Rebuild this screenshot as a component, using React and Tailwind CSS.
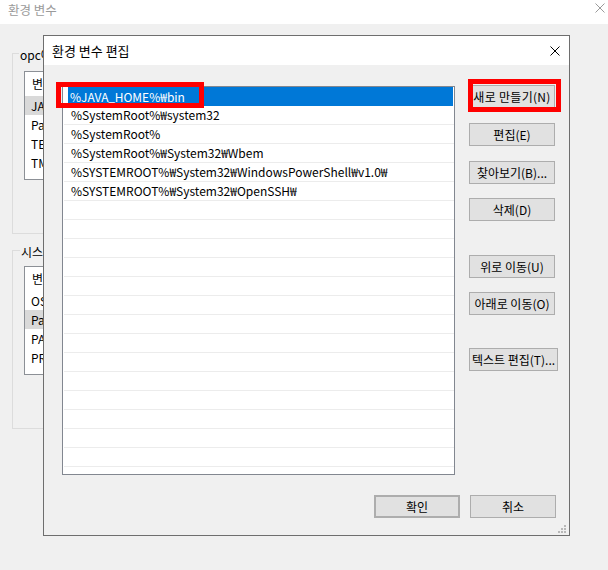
import React from "react";

const FONT = "font-['Noto_Sans_CJK_KR','Noto_Sans',sans-serif]";

function XIcon({ color, className }) {
  return (
    <svg width="10" height="10" viewBox="0 0 10 10" className={className}>
      <path d="M0.5 0.5 L9.5 9.5 M9.5 0.5 L0.5 9.5" stroke={color} strokeWidth="1" fill="none" />
    </svg>
  );
}

function Btn({ children, className = "" }) {
  return (
    <div
      className={`h-[23px] flex items-center justify-center bg-[#e1e1e1] border border-[#adadad] text-[12px] leading-[16px] text-black whitespace-nowrap ${className}`}
    >
      {children}
    </div>
  );
}

function BgList({ rows, highlight }) {
  return (
    <div className="w-[520px] h-[109px] bg-white border border-[#8c9096] overflow-hidden">
      <div className="h-[24px] flex items-center pl-[7px] text-[12px] leading-[16px]">
        <span className="w-[150px]">변수</span>
        <span>값</span>
      </div>
      {rows.map((r, i) => (
        <div
          key={i}
          className={`h-[19px] flex items-center pl-[6px] text-[12px] leading-[16px] ${
            i === highlight ? "bg-[#d9d9d9]" : ""
          }`}
        >
          {r}
        </div>
      ))}
    </div>
  );
}

const items = [
  "%SystemRoot%₩system32",
  "%SystemRoot%",
  "%SystemRoot%₩System32₩Wbem",
  "%SYSTEMROOT%₩System32₩WindowsPowerShell₩v1.0₩",
  "%SYSTEMROOT%₩System32₩OpenSSH₩",
];

export default function App() {
  const allRows = [...items, ...Array(15).fill("")];
  return (
    <div className={`relative w-[608px] h-[570px] overflow-hidden bg-[#f0f0f0] ${FONT} text-[12px] text-black`}>
      {/* background window title bar */}
      <div className="h-[24px] bg-white flex items-start justify-between">
        <span className="ml-[8px] mt-[2px] text-[12.5px] leading-[15px] text-[#9a9a9a]">환경 변수</span>
        <XIcon color="#9a9a9a" className="mr-[3px] mt-[3px]" />
      </div>

      {/* background window body */}
      <div className="pl-[12px]">
        <div className="mt-[29px] w-[545px] h-[181px] border border-[#dcdcdc]">
          <div className="-mt-[7px] ml-[6px] w-fit h-[16px] px-[1px] bg-[#f0f0f0] leading-[16px]">
            opc에 대한 사용자 변수(U)
          </div>
          <div className="mt-[8px] ml-[11px]">
            <BgList rows={["JAVA_HOME", "Path", "TEMP", "TMP"]} highlight={0} />
          </div>
        </div>
        <div className="mt-[16px] w-[545px] h-[179px] border border-[#dcdcdc]">
          <div className="-mt-[7px] ml-[7px] w-fit h-[16px] px-[1px] bg-[#f0f0f0] leading-[16px]">
            시스템 변수(S)
          </div>
          <div className="mt-[6px] ml-[11px]">
            <BgList rows={["OS", "Path", "PATHEXT", "PROCESSOR_ARCHITECTURE"]} highlight={1} />
          </div>
        </div>
      </div>

      {/* dialog window */}
      <div className="absolute left-[43px] top-[35px] w-[527px] h-[501px] border border-[#6e6e6e] bg-[#f0f0f0] flex flex-col">
        <div className="h-[29px] shrink-0 bg-white flex items-center justify-between">
          <span className="ml-[8px] text-[13px] leading-[16px] text-black">환경 변수 편집</span>
          <XIcon color="#000000" className="mr-[9px]" />
        </div>

        <div className="flex pt-[21px] pl-[18px]">
          {/* list */}
          <div className="w-[393px] h-[389px] bg-white border border-[#828790] overflow-hidden">
            <div className="h-[19px] flex">
              <div className="ml-[5px] mr-[1px] flex-1 bg-[#0078d7] text-white pl-[2px] flex items-center leading-[18px] whitespace-pre">
                <span>%JAVA</span>
                <span className="font-['Liberation_Sans',sans-serif] text-[11px]">_</span>
                <span>HOME%₩bin</span>
              </div>
            </div>
            {allRows.map((r, i) => (
              <div
                key={i}
                className="h-[19px] border-b border-[#ececec] flex items-center pl-[7px] leading-[18px] ml-[1px]"
              >
                {r}
              </div>
            ))}
          </div>

          {/* buttons column */}
          <div className="ml-[14px] -mt-[1px] flex flex-col">
            <Btn className="w-[86px] tracking-[0.3px]">새로 만들기(N)</Btn>
            <Btn className="w-[86px] mt-[15px]">편집(E)</Btn>
            <Btn className="w-[86px] mt-[15px]">찾아보기(B)...</Btn>
            <Btn className="w-[86px] mt-[14px]">삭제(D)</Btn>
            <Btn className="w-[86px] mt-[34px]">위로 이동(U)</Btn>
            <Btn className="w-[86px] mt-[14px]">아래로 이동(O)</Btn>
            <Btn className="w-[89px] mt-[33px]">텍스트 편집(T)...</Btn>
          </div>
        </div>

        <div className="flex justify-end gap-[10px] mt-[20px] pr-[13px]">
          <Btn className="w-[86px] border-2 border-[#0078d7]">확인</Btn>
          <Btn className="w-[86px]">취소</Btn>
        </div>

        {/* annotation boxes */}
        <div className="absolute left-[12px] top-[46px] w-[148px] h-[26px] border-[5px] border-[#ff0000]" />
        <div className="absolute left-[424px] top-[43px] w-[93px] h-[33px] border-[5px] border-[#ff0000]" />

        {/* resize grip */}
        <svg className="absolute right-[2px] bottom-[1px]" width="9" height="9" viewBox="0 0 9 9">
          <rect x="6" y="0" width="2" height="2" fill="#b8b8b8" />
          <rect x="3" y="3" width="2" height="2" fill="#b8b8b8" />
          <rect x="6" y="3" width="2" height="2" fill="#b8b8b8" />
          <rect x="0" y="6" width="2" height="2" fill="#b8b8b8" />
          <rect x="3" y="6" width="2" height="2" fill="#b8b8b8" />
          <rect x="6" y="6" width="2" height="2" fill="#b8b8b8" />
        </svg>
      </div>
    </div>
  );
}
